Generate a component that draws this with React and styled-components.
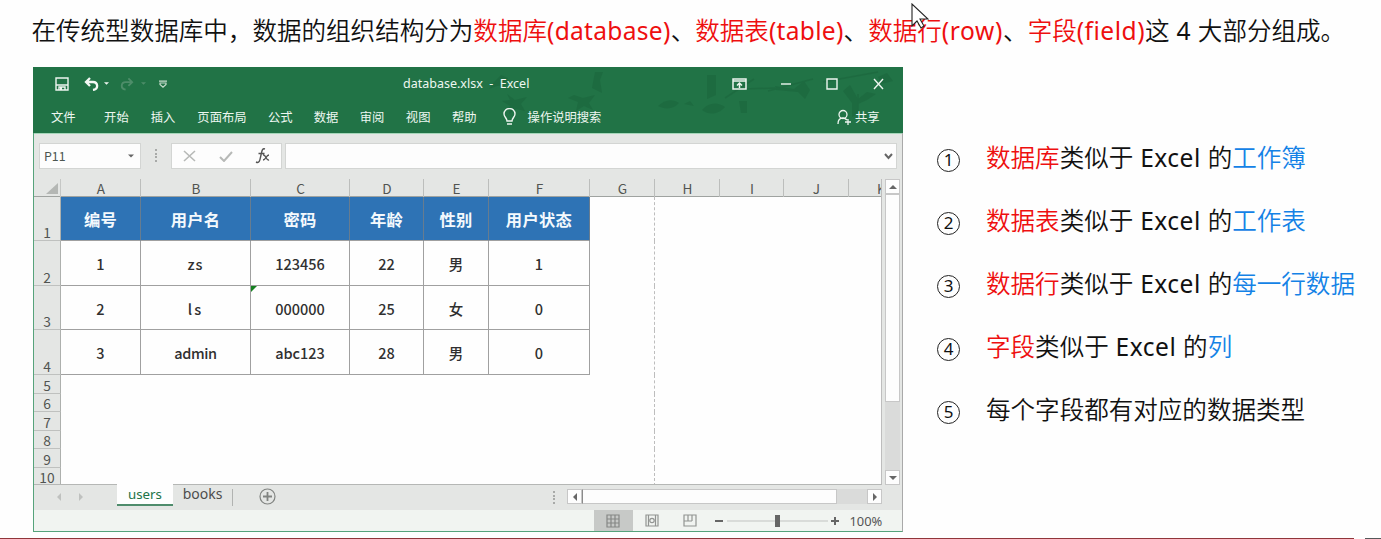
import React from "react";
import styled, { createGlobalStyle } from "styled-components";

const Global = createGlobalStyle`
  * { box-sizing: border-box; }
  body { margin: 0; background: #fefefe; overflow: hidden; }
  svg { display: block; flex: none; }
`;

const uiFont = `"Noto Sans", "Noto Sans CJK SC", sans-serif`;
const cjkFont = `"Noto Sans CJK SC", sans-serif`;

const Slide = styled.div`
  position: relative;
  width: 1381px;
  height: 539px;
  display: flex;
  flex-direction: column;
  background: #fefefe;
  color: #111;
  font-family: ${uiFont};
`;
const Heading = styled.h1`
  margin: 0;
  height: 67px;
  padding: 12px 0 0 31.5px;
  font-family: ${cjkFont};
  font-size: 24.55px;
  font-weight: 350;
  line-height: 36px;
  white-space: nowrap;
`;
const Red = styled.span`color: #ee0f0f;`;
const Blue = styled.span`color: #1482e6;`;
const Latin = styled.span`
  font-family: ${uiFont};
  font-weight: 400;
  font-variant-ligatures: none;
  letter-spacing: ${(p) => p.$track || 0}px;
`;

const Content = styled.div`
  display: flex;
  height: 465px;
  padding-left: 33px;
`;
const Window = styled.section`
  width: 870px;
  height: 465px;
  flex: none;
  display: flex;
  flex-direction: column;
  border: 1px solid #56a37b;
  border-right-color: #a9a9a9;
  border-top: 0;
  background: #e4e6e4;
`;
const GreenTop = styled.header`
  position: relative;
  height: 66px;
  margin: 0 -1px;
  padding: 0 1px;
  background: #217346;
  color: #eef7f1;
  display: flex;
  flex-direction: column;
`;
const Leaves = styled.svg`
  position: absolute;
  right: 0;
  top: 0;
`;
const TopRow = styled.div`
  position: relative;
  height: 33px;
  display: flex;
  align-items: center;
`;
const Slot = styled.div`
  flex: none;
  margin-left: ${(p) => p.$gap || 0}px;
  width: ${(p) => (p.$w ? `${p.$w}px` : "auto")};
`;
const FileName = styled.div`
  margin-left: 236px;
  width: 128px;
  font-size: 12.5px;
  line-height: 18px;
  white-space: pre;
`;
const MenuItem = styled.div`
  flex: none;
  margin-left: ${(p) => p.$gap}px;
  font: 400 12.3px/18px ${cjkFont};
  white-space: nowrap;
`;
const FormulaBar = styled.div`
  height: 46px;
  padding: 9px 0 0 5px;
  display: flex;
  border-top: 1px solid #a5d6b9;
`;
const Field = styled.div`
  height: 26px;
  width: ${(p) => p.$w}px;
  margin-left: ${(p) => p.$gap || 0}px;
  padding: ${(p) => p.$pad || "0"};
  display: flex;
  align-items: center;
  justify-content: space-between;
  background: #fdfdfd;
  border: 1px solid #d3d5d3;
  font: 12.4px/24px ${cjkFont};
  color: #4c5651;
`;
const DotColumn = styled.div`
  width: 2px;
  height: 13px;
  margin: ${(p) => p.$margin};
  flex: none;
  background: repeating-linear-gradient(#a8aaa8 0 2px, transparent 2px 3.6px);
`;
const Workspace = styled.div`
  display: flex;
  height: 306px;
`;
const Sheet = styled.div`
  width: 848px;
  height: 306px;
  overflow: hidden;
  background: #fefefe;
  border-right: 1px solid #bdbdbd;
  border-bottom: 1px solid #b5b7b5;
`;
const columns = "27px 80px 110px 99px 74px 65px 101px 65px 65px 64px 65px 33px";
const ColumnRow = styled.div`
  display: grid;
  grid-template-columns: ${columns};
  height: 18px;
  background: #e4e6e4;
  border-bottom: 1px solid #9fa3a0;
`;
const ColumnHead = styled.div`
  padding: ${(p) => (p.$cut ? "0 0 0 28px" : "0 0 0 1px")};
  text-align: ${(p) => (p.$cut ? "left" : "center")};
  border-right: 1px solid #bcbebc;
  font: 13.6px/18px ${cjkFont};
  color: #515451;
`;
const Corner = styled.div`
  display: flex;
  justify-content: flex-end;
  padding: 4px 2px 0 0;
  border-right: 1px solid #c5c7c5;
`;
const Row = styled.div`
  display: grid;
  grid-template-columns: ${columns};
  height: ${(p) => p.$h}px;
`;
const RowHead = styled.div`
  display: flex;
  align-items: flex-end;
  justify-content: center;
  background: #e4e6e4;
  border-right: 1px solid #adb0ad;
  border-bottom: 1px solid #bfc1bf;
  font: 13.8px/15px ${cjkFont};
  color: #515451;
`;
const Cell = styled.div`
  position: relative;
  display: flex;
  align-items: center;
  justify-content: center;
  padding-top: ${(p) => (p.$head ? 0 : 2)}px;
  background: ${(p) => (p.$head ? "#2e73b5" : "#fefefe")};
  color: ${(p) => (p.$head ? "#f4f9fd" : "#303030")};
  border-right: 1px solid ${(p) => (p.$head ? "#667c90" : "#a0a0a0")};
  border-bottom: 1px solid #a0a0a0;
  font: ${(p) => (p.$head ? 700 : 500)} ${(p) => (p.$head ? 16.3 : 14.5)}px/22px ${cjkFont};
  letter-spacing: ${(p) => p.$track || 0}px;
`;
const ErrorMark = styled.i`
  position: absolute;
  left: 0;
  top: 0;
  border-top: 6px solid #148020;
  border-right: 6px solid transparent;
`;
const Blank = styled.div`
  grid-column: span ${(p) => p.$span || 1};
  border-right: ${(p) => (p.$pageEdge ? "1px dashed #bdbdbd" : "0")};
`;
const VScroll = styled.div`
  width: 20px;
  padding: 0 2px 0 3px;
  display: flex;
  flex-direction: column;
  background: #e4e6e4;
`;
const ScrollButton = styled.div`
  width: 15px;
  height: 15px;
  flex: none;
  display: grid;
  place-items: center;
  background: #fdfdfd;
  border: 1px solid #c7c7c7;
`;
const VTrack = styled.div`
  flex: 1;
  background: #dadbda;
`;
const VThumb = styled.div`
  height: 208px;
  background: #fdfdfd;
  border: 1px solid #c7c7c7;
`;
const TabBar = styled.div`
  height: 25px;
  display: flex;
  background: #e4e6e4;
`;
const TabArrows = styled.div`
  width: 83px;
  padding: 8px 0 0 22px;
`;
const Tab = styled.div`
  width: ${(p) => p.$w}px;
  height: ${(p) => (p.$active ? 22 : 20)}px;
  margin-top: -1px;
  text-align: center;
  font: ${(p) => (p.$active ? 13.3 : 14)}px/20px ${uiFont};
  color: ${(p) => (p.$active ? "#217346" : "#4d4d4d")};
  background: ${(p) => (p.$active ? "#fefefe" : "transparent")};
  border-bottom: ${(p) => (p.$active ? "2px solid #4f8c6c" : "0")};
`;
const Divider = styled.div`
  width: 1px;
  height: 17px;
  margin-top: 4px;
  background: #b1b3b1;
`;
const HScroll = styled.div`
  display: flex;
  width: 315px;
  height: 15px;
  margin: 4px 0 0 12px;
  background: #dadbda;
`;
const HThumb = styled.div`
  width: 255px;
  background: #fdfdfd;
  border: 1px solid #c7c7c7;
  border-left-color: #8b8b8b;
`;
const StatusBar = styled.footer`
  height: 21px;
  display: flex;
  align-items: center;
  padding-left: 560px;
  background: #f1f4f1;
`;
const ViewButton = styled.div`
  width: 38.5px;
  height: 21px;
  display: grid;
  place-items: center;
  background: ${(p) => (p.$active ? "#c7c9c7" : "transparent")};
`;
const ZoomLabel = styled.div`
  margin-left: 10px;
  font: 12.9px/20px ${uiFont};
  color: #555;
`;
const Notes = styled.ol`
  margin: 0;
  padding: 71.5px 0 0 34px;
  list-style: none;
  display: flex;
  flex-direction: column;
`;
const Note = styled.li`
  height: 63px;
  display: flex;
  font-family: ${cjkFont};
  font-size: 24.55px;
  font-weight: 350;
  line-height: 36px;
  white-space: nowrap;
`;
const NoteNumber = styled.span`
  width: 23px;
  height: 23px;
  margin: 10px 26px 0 0;
  display: grid;
  place-items: center;
  border: 1.5px solid #222;
  border-radius: 50%;
  font: 17px/20px ${uiFont};
`;
const BottomRule = styled.div`
  height: 1px;
  margin-top: auto;
  background: linear-gradient(90deg, #90353a 0 1354px, transparent 1354px 1365px, #55585a 1365px);
`;
const Pointer = styled.svg`
  position: absolute;
  left: 911px;
  top: 3px;
`;

const Triangle = ({ dir = "down", color = "#666", w = 8 }) => (
  <svg width={w} height={w} viewBox="0 0 8 8">
    <path
      fill={color}
      d={{ down: "M0 2h8L4 6z", up: "M0 6h8L4 2z", left: "M6 0v8L2 4z", right: "M2 0v8l4-4z" }[dir]}
    />
  </svg>
);

const records = [
  { h: 45, cells: ["1", "zs", "123456", "22", "男", "1"] },
  { h: 44, cells: ["2", "ls", "000000", "25", "女", "0"] },
  { h: 45, cells: ["3", "admin", "abc123", "28", "男", "0"] },
];
const tracking = { zs: 1, ls: 2, admin: -0.4 };
const emptyRows = [19, 18, 19, 18, 19, 18];
const menus = [
  ["文件", 17], ["开始", 28.5], ["插入", 22], ["页面布局", 22], ["公式", 21.5],
  ["数据", 21], ["审阅", 21.5], ["视图", 21.5], ["帮助", 21.5],
];
const notes = [
  { term: "数据库", target: "工作簿" },
  { term: "数据表", target: "工作表" },
  { term: "数据行", target: "每一行数据" },
  { term: "字段", target: "列" },
];

function WindowHeader() {
  return (
    <GreenTop>
      <Leaves width="480" height="66" viewBox="0 0 480 66" fill="#1c673e" opacity=".65">
        <path d="M70 16l8-8 7 3-3 7-8 1-8 3zM84 27l8 6 12-3-6 7 4 7-9-2-7 5 1-8-8-5 8-1zM151 28l9 3 12-3-6 8 4 7-9-4-8 5 2-9-10-4zM172 5h8l-3 8 2 13-10-5zM235 39c6-6 14-8 21-3-5 6-13 7-21 3zM261 37l6-3 4 5zM284 8h9v20l-9 4zM279 43c7-8 16-8 23-3-6 7-15 9-23 3zM316 34h8v12h-6zM352 19l19 3 10-8 6 9-5 9-7-7-22-2zM427 18l8 14 9-7 9 2-9 6-9 4v10l-6 3v-14l-9-12zM455 10l9-4 6 8-12 3z" />
        <path d="M302 31L331 12M321 22L352 21M345 24L390 12M400 15L455 5M435 27v20" fill="none" stroke="#1c673e" strokeWidth="1.5" />
      </Leaves>
      <TopRow>
        <Slot $gap={21} $w={14}>
          <svg width="14" height="14" viewBox="0 0 14 14" fill="none" stroke="#edf5ef" strokeWidth="1.4">
            <path d="M1 1h12v12H1zM1 8h12M4 13v-3h6v3" /><path d="M5 10h2v3H5z" fill="#edf5ef" stroke="none" />
          </svg>
        </Slot>
        <Slot $gap={15} $w={15}>
          <svg width="15" height="14" viewBox="0 0 15 14" fill="none" stroke="#f3f8f4" strokeWidth="2.3">
            <path d="M6 1L2 5l4 4M2 5h7c5 0 6 7 0 8" />
          </svg>
        </Slot>
        <Slot $gap={5} $w={5}><Triangle color="#eef5ef" w={5} /></Slot>
        <Slot $gap={11} $w={14}>
          <svg width="14" height="14" viewBox="0 0 15 14" fill="none" stroke="#4d8d69" strokeWidth="2">
            <path d="M9 1l4 4-4 4M13 5H6C1 5 0 12 6 13" />
          </svg>
        </Slot>
        <Slot $gap={7} $w={5}><Triangle color="#4d8d69" w={5} /></Slot>
        <Slot $gap={13} $w={8}>
          <svg width="8" height="8" viewBox="0 0 8 8" fill="none" stroke="#c4dccb" strokeWidth="1.2"><path d="M0 1.2h8M1 3v1.5l3 2.7 3-2.7V3z" /></svg>
        </Slot>
        <FileName>database.xlsx  -  Excel</FileName>
        <Slot $gap={201} $w={15}>
          <svg width="15" height="12" viewBox="0 0 15 12" fill="none" stroke="#edf5ef" strokeWidth="1.5"><path d="M1 1h13v10H1zM1 3h13M7.5 10V5M5 7.5L7.5 5 10 7.5" /></svg>
        </Slot>
        <Slot $gap={33} $w={12}><svg width="12" height="12" viewBox="0 0 12 12" stroke="#edf5ef" strokeWidth="1.4"><path d="M1 6h10" /></svg></Slot>
        <Slot $gap={34} $w={12}><svg width="12" height="12" viewBox="0 0 12 12" fill="none" stroke="#edf5ef" strokeWidth="1.4"><path d="M1 1h10v10H1z" /></svg></Slot>
        <Slot $gap={35} $w={11}><svg width="11" height="12" viewBox="0 0 11 12" stroke="#edf5ef" strokeWidth="1.4"><path d="M1 1l9 10M10 1L1 11" /></svg></Slot>
      </TopRow>
      <TopRow>
        {menus.map(([label, gap]) => <MenuItem key={label} $gap={gap}>{label}</MenuItem>)}
        <Slot $gap={26} $w={13}>
          <svg width="13" height="18" viewBox="0 0 13 18" fill="none" stroke="#edf5ef" strokeWidth="1.4">
            <path d="M4 13c0-3-3-4-3-7a5.5 5.5 0 0 1 11 0c0 3-3 4-3 7zM4 16h5" />
          </svg>
        </Slot>
        <MenuItem $gap={12}>操作说明搜索</MenuItem>
        <Slot $gap={235.5} $w={14}>
          <svg width="14" height="16" viewBox="0 0 14 16" fill="none" stroke="#edf5ef" strokeWidth="1.3">
            <circle cx="6" cy="5.5" r="4" /><path d="M1 15c0-4 2-6 5-6 2 0 3 1 4 2M8 13h6M11 10v6" />
          </svg>
        </Slot>
        <MenuItem $gap={4}>共享</MenuItem>
      </TopRow>
    </GreenTop>
  );
}

function Spreadsheet() {
  return (
    <Workspace>
      <Sheet>
        <ColumnRow>
          <Corner><svg width="12" height="11"><path d="M12 0v11H0z" fill="#b4b7b4" /></svg></Corner>
          {"ABCDEFGHIJK".split("").map((c) => <ColumnHead key={c} $cut={c === "K"}>{c}</ColumnHead>)}
        </ColumnRow>
        <Row $h={44}>
          <RowHead>1</RowHead>
          {["编号", "用户名", "密码", "年龄", "性别", "用户状态"].map((t) => <Cell key={t} $head $track={0.3}>{t}</Cell>)}
          <Blank $pageEdge />
        </Row>
        {records.map(({ h, cells }, r) => (
          <Row key={r} $h={h}>
            <RowHead>{r + 2}</RowHead>
            {cells.map((t, i) => (
              <Cell key={i} $track={tracking[t]}>{r === 1 && i === 2 && <ErrorMark />}{t}</Cell>
            ))}
            <Blank $pageEdge />
          </Row>
        ))}
        {emptyRows.map((h, i) => (
          <Row key={i} $h={h}><RowHead>{i + 5}</RowHead><Blank $span={7} $pageEdge /></Row>
        ))}
      </Sheet>
      <VScroll>
        <ScrollButton><Triangle dir="up" /></ScrollButton>
        <VTrack><VThumb /></VTrack>
        <ScrollButton><Triangle /></ScrollButton>
      </VScroll>
    </Workspace>
  );
}

function ExcelWindow() {
  return (
    <Window>
      <WindowHeader />
      <FormulaBar>
        <Field $w={102} $pad="0 6px 0 4px">P11<Triangle w={6} /></Field>
        <DotColumn $margin="6px 0 0 14px" />
        <Field $w={111} $gap={14} $pad="0 11px 0 11px">
          <svg width="13" height="12" viewBox="0 0 13 12" stroke="#b7b9b7" strokeWidth="1.6"><path d="M1 1l11 10M12 1L1 11" /></svg>
          <svg width="14" height="12" viewBox="0 0 14 12" fill="none" stroke="#b7b9b7" strokeWidth="2"><path d="M1 7l4 4 8-9" /></svg>
          <svg width="15" height="16" viewBox="0 0 15 16" fill="none" stroke="#555" strokeWidth="1.4"><path d="M10 1C7 0 7 3 6 7s-1 9-5 7M3.5 5.5h6M8 7c3-1 3 6 6 5M14 7c-3 0-3 5-6 5" /></svg>
        </Field>
        <Field $w={612} $gap={3} $pad="0 3px">
          <span />
          <svg width="9" height="7" viewBox="0 0 9 7" fill="none" stroke="#666" strokeWidth="2"><path d="M1 1l3.5 4L8 1" /></svg>
        </Field>
      </FormulaBar>
      <Spreadsheet />
      <TabBar>
        <TabArrows><svg width="28" height="8" viewBox="0 0 28 8" fill="#bfc1bf"><path d="M5 0v8L1 4zM23 0v8l4-4z" /></svg></TabArrows>
        <Tab $w={56} $active>users</Tab>
        <Tab $w={59}>books</Tab>
        <Divider />
        <Slot $gap={26} $w={17}>
          <svg width="17" height="23" viewBox="0 -3 17 23" fill="none" stroke="#818481" strokeWidth="1.2"><circle cx="8.5" cy="8.5" r="7.5" /><path d="M8.5 4v9M4 8.5h9" strokeWidth="1.8" /></svg>
        </Slot>
        <DotColumn $margin="6px 0 0 277px" />
        <HScroll>
          <ScrollButton><Triangle dir="left" /></ScrollButton>
          <HThumb />
          <Slot $w={30} />
          <ScrollButton><Triangle dir="right" /></ScrollButton>
        </HScroll>
      </TabBar>
      <StatusBar>
        <ViewButton $active><svg width="14" height="14" viewBox="0 0 14 14" fill="none" stroke="#858785" strokeWidth="1.2"><path d="M1 1h12v12H1zM5 1v12M9 1v12M1 5h12M1 9h12" /></svg></ViewButton>
        <ViewButton><svg width="14" height="13" viewBox="0 0 14 13" fill="none" stroke="#929492" strokeWidth="1.2"><path d="M1 1h12v11H1zM3.5 1v11M10.5 1v11" /><circle cx="7" cy="6.5" r="2.2" /></svg></ViewButton>
        <ViewButton><svg width="14" height="13" viewBox="0 0 14 13" fill="none" stroke="#929492" strokeWidth="1.2"><path d="M1 1h12v11H1zM5 1v6M9 1v6M1 7h8" /></svg></ViewButton>
        <Slot $gap={4}>
          <svg width="126" height="14" viewBox="0 0 126 14" fill="none" stroke="#666" strokeWidth="2"><path d="M1 7h8M117 7h8M121 3v8" /><path d="M13 7h101" stroke="#c1c3c1" strokeWidth="1" /><path d="M61 1h5v12h-5z" fill="#666" stroke="none" /></svg>
        </Slot>
        <ZoomLabel>100%</ZoomLabel>
      </StatusBar>
    </Window>
  );
}

export default function App() {
  return (
    <Slide>
      <Global />
      <Heading>
        在传统型数据库中，数据的组织结构分为<Red>数据库<Latin $track={0.3}>(database)</Latin></Red>、<Red>数据表<Latin $track={0.3}>(table)</Latin></Red>、<Red>数据行<Latin $track={0.65}>(row)</Latin></Red>、<Red>字段<Latin $track={0.5}>(field)</Latin></Red>这<Latin $track={0.5}> 4 </Latin>大部分组成。
      </Heading>
      <Content>
        <ExcelWindow />
        <Notes>
          {notes.map(({ term, target }, i) => (
            <Note key={term}>
              <NoteNumber>{i + 1}</NoteNumber>
              <span><Red>{term}</Red>类似于<Latin $track={0.5}> Excel </Latin>的<Blue>{target}</Blue></span>
            </Note>
          ))}
          <Note><NoteNumber>5</NoteNumber><span>每个字段都有对应的数据类型</span></Note>
        </Notes>
      </Content>
      <BottomRule />
      <Pointer width="18" height="26" viewBox="0 0 18 26" fill="#fff" stroke="#222" strokeWidth="1.1">
        <path d="M1 1v22l5-5 4 7 3-2-4-7h8z" />
      </Pointer>
    </Slide>
  );
}
